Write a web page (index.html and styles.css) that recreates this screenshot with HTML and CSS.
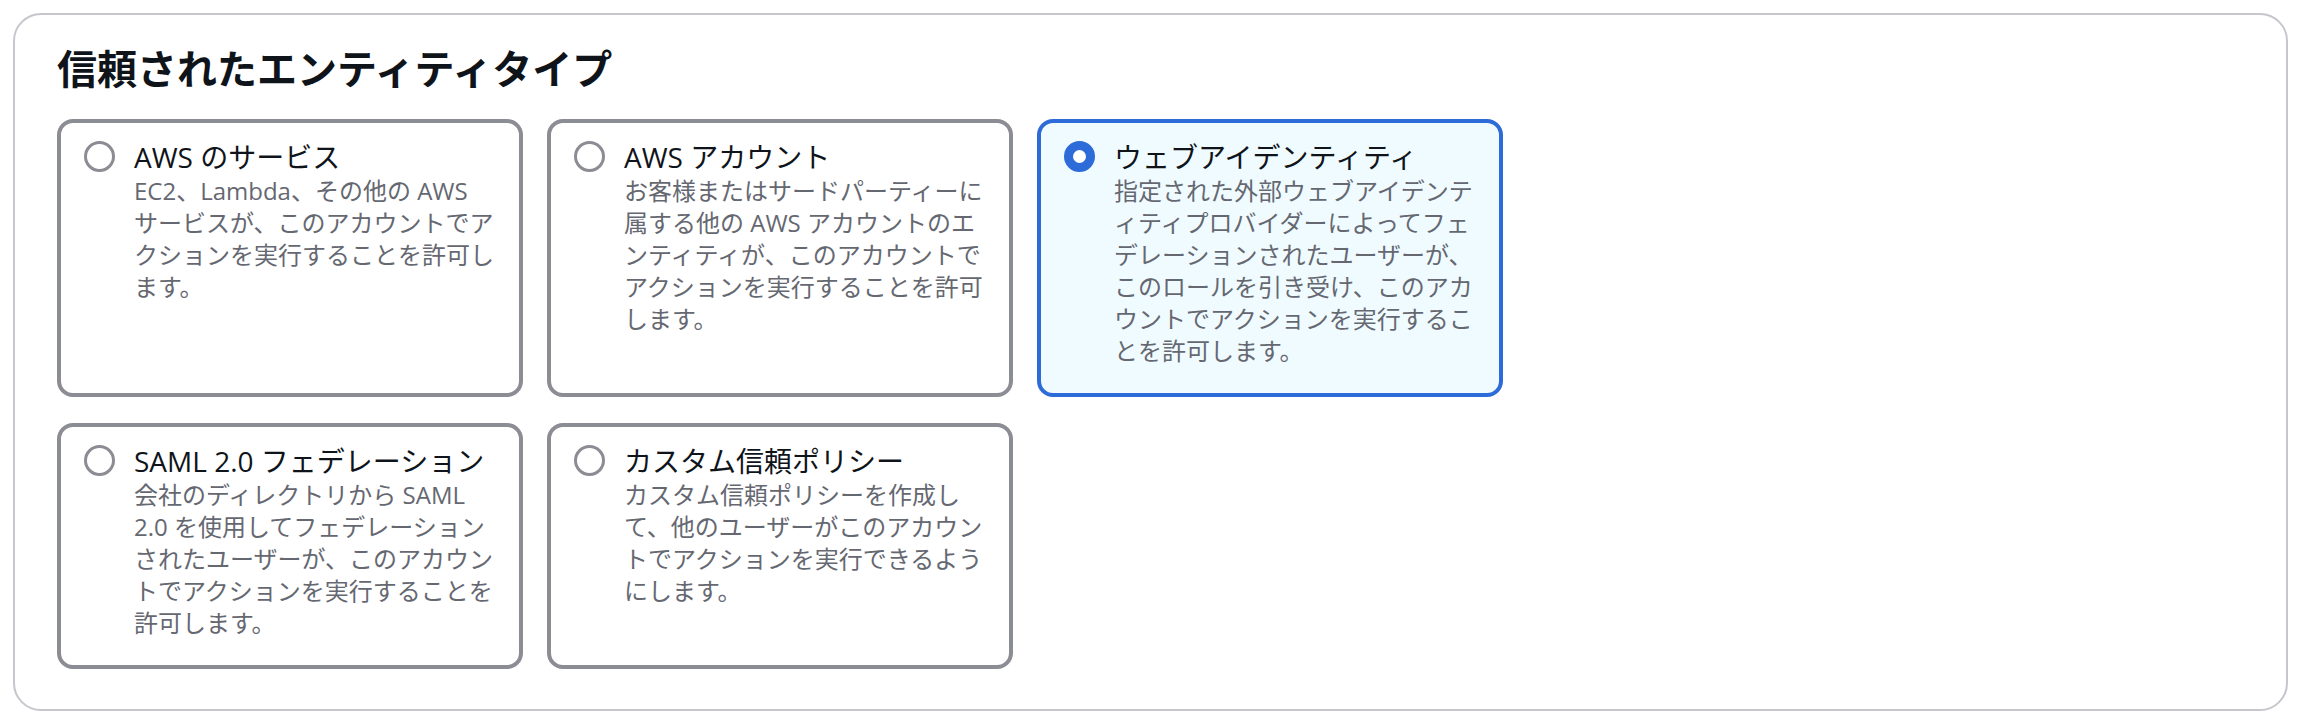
FILE: index.html
```html
<!DOCTYPE html>
<html lang="ja">
<head>
<meta charset="utf-8">
<title>信頼されたエンティティタイプ</title>
<link rel="stylesheet" href="styles.css">
</head>
<body>
<section class="container">
  <h2 class="title">信頼されたエンティティタイプ</h2>
  <div class="tiles">
    <div class="tile">
      <span class="radio"></span>
      <div class="text">
        <div class="label">AWS のサービス</div>
        <div class="desc">EC2、Lambda、その他の AWS<br>サービスが、このアカウントでア<br>クションを実行することを許可し<br>ます。</div>
      </div>
    </div>
    <div class="tile">
      <span class="radio"></span>
      <div class="text">
        <div class="label">AWS アカウント</div>
        <div class="desc">お客様またはサードパーティーに<br>属する他の AWS アカウントのエ<br>ンティティが、このアカウントで<br>アクションを実行することを許可<br>します。</div>
      </div>
    </div>
    <div class="tile selected">
      <span class="radio checked"></span>
      <div class="text">
        <div class="label">ウェブアイデンティティ</div>
        <div class="desc">指定された外部ウェブアイデンテ<br>ィティプロバイダーによってフェ<br>デレーションされたユーザーが、<br>このロールを引き受け、このアカ<br>ウントでアクションを実行するこ<br>とを許可します。</div>
      </div>
    </div>
    <div class="tile">
      <span class="radio"></span>
      <div class="text">
        <div class="label">SAML 2.0 フェデレーション</div>
        <div class="desc">会社のディレクトリから SAML<br>2.0 を使用してフェデレーション<br>されたユーザーが、このアカウン<br>トでアクションを実行することを<br>許可します。</div>
      </div>
    </div>
    <div class="tile">
      <span class="radio"></span>
      <div class="text">
        <div class="label">カスタム信頼ポリシー</div>
        <div class="desc">カスタム信頼ポリシーを作成し<br>て、他のユーザーがこのアカウン<br>トでアクションを実行できるよう<br>にします。</div>
      </div>
    </div>
  </div>
</section>
</body>
</html>
```

FILE: styles.css
```css
html, body {
  background: #ffffff;
}

body {
  margin: 13px 22px 17px 13px;
  font-family: "Open Sans", "Noto Sans CJK JP", sans-serif;
  color: #0f141a;
}

.container {
  border: 2px solid #c6c6cd;
  border-radius: 28px;
  padding: 30px 40px 39px 42px;
  box-sizing: border-box;
  height: 698px;
}

.title {
  margin: 0 0 26px 0;
  font-size: 40px;
  line-height: 48px;
  font-weight: 700;
  color: #0f141a;
}

.tiles {
  display: grid;
  grid-template-columns: repeat(3, 466px);
  column-gap: 24px;
  row-gap: 26px;
}

.tile {
  display: flex;
  align-items: flex-start;
  gap: 19px;
  border: 4px solid #8c8c94;
  border-radius: 16px;
  padding: 16px 20px 26px 23px;
  background: #ffffff;
}

.tile.selected {
  border-color: #2d6bd9;
  background: #f0fbff;
}

.radio {
  flex: none;
  width: 31px;
  height: 31px;
  margin-top: 2px;
  box-sizing: border-box;
  border: 3.5px solid #8c8c94;
  border-radius: 50%;
  background: #ffffff;
}

.radio.checked {
  border: 9px solid #2d6bd9;
  background: #ffffff;
}

.label {
  font-size: 28px;
  line-height: 36px;
  color: #0f141a;
  white-space: nowrap;
}

.desc {
  font-size: 24px;
  line-height: 32px;
  color: #656871;
  white-space: nowrap;
}
```
